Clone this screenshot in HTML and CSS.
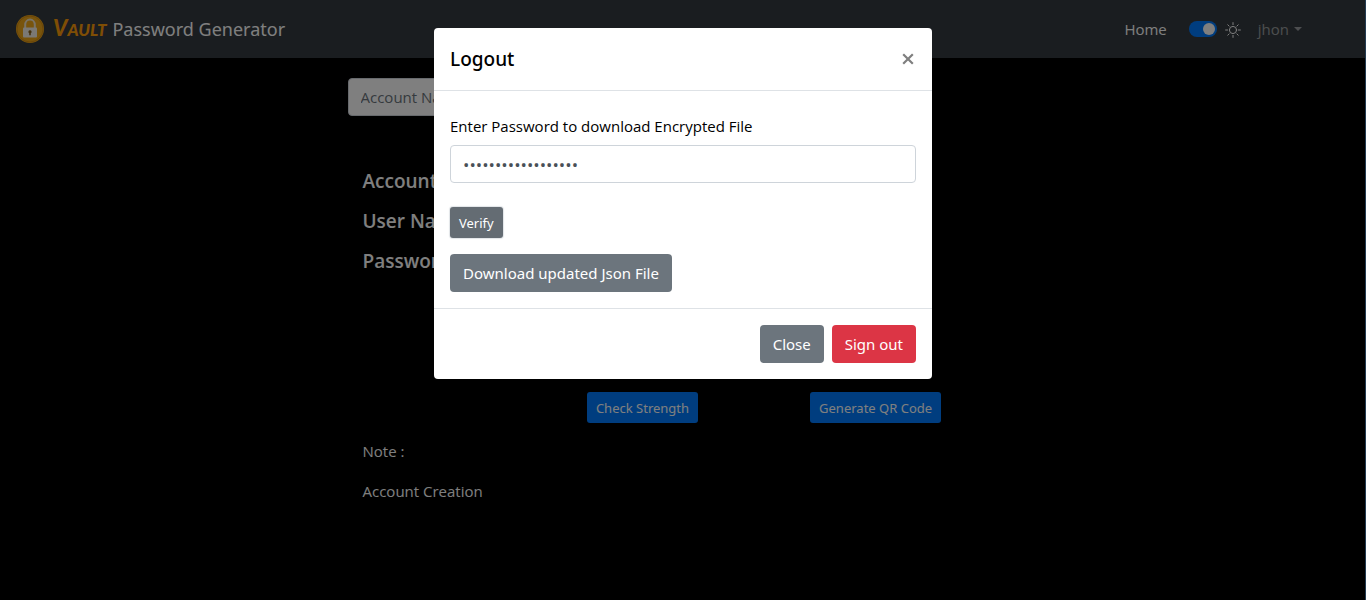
FILE: index.html
```
<!DOCTYPE html>
<html lang="en">
<head>
<meta charset="utf-8">
<meta name="viewport" content="width=device-width, initial-scale=1">
<title>Vault Password Generator</title>
<link rel="stylesheet" href="styles.css">
</head>
<body>
<header class="navbar">
  <a class="brand" href="#">
    <svg class="brand-icon" viewBox="0 0 28 28" aria-hidden="true">
      <circle cx="14" cy="14" r="14" fill="#f0a818"/>
      <circle cx="14" cy="14" r="13" fill="none" stroke="#d98d10" stroke-width="1"/>
      <path d="M9.2 13V9.8a4.8 5.3 0 0 1 9.6 0V13" fill="none" stroke="#f2e6cc" stroke-width="2"/>
      <rect x="7" y="12.5" width="14" height="10" rx="1" fill="#f7f2ea"/>
      <path d="M14 15.2a1.6 1.6 0 0 1 .8 3v2h-1.6v-2a1.6 1.6 0 0 1 .8-3z" fill="#8a6520"/>
    </svg>
    <span class="brand-mark">V<span class="brand-small">AULT</span></span>
    <span class="brand-name">Password Generator</span>
  </a>
  <nav class="nav">
    <a class="nav-link" href="#">Home</a>
    <div class="theme">
      <input class="switch" type="checkbox" id="theme" aria-label="Dark mode" checked>
      <label for="theme"><svg class="sun" viewBox="0 0 16 16" fill="none" stroke="#fff" stroke-width="1" stroke-linecap="round" aria-hidden="true">
        <circle cx="8" cy="8" r="3.6"/>
        <path d="M8 .6v2M8 13.4v2M.6 8h2M13.4 8h2M2.8 2.8l1.3 1.3M11.9 11.9l1.3 1.3M2.8 13.2l1.3-1.3M11.9 4.1l1.3-1.3"/>
      </svg></label>
    </div>
    <button class="user" type="button">jhon<span class="caret"></span></button>
  </nav>
</header>

<main class="page">
  <input class="control search" type="text" placeholder="Account Name" aria-label="Account Name">
  <section class="details">
    <h2 class="field">Account</h2>
    <h2 class="field">User Name</h2>
    <h2 class="field">Password</h2>
    <div class="actions">
      <button class="btn btn-sm btn-primary" type="button">Check Strength</button>
      <button class="btn btn-sm btn-primary" type="button">Generate QR Code</button>
    </div>
    <p class="line">Note :</p>
    <p class="line">Account Creation</p>
  </section>
</main>

<div class="backdrop">
  <div class="modal" role="dialog" aria-modal="true" aria-labelledby="modal-title">
    <div class="modal-header">
      <h1 class="modal-title" id="modal-title">Logout</h1>
      <button class="dismiss" type="button" aria-label="Dismiss">
        <svg class="cross" viewBox="0 0 12 12" aria-hidden="true"><path d="M1.2 1.2l9.6 9.6M10.8 1.2L1.2 10.8" stroke="#7f7f7f" stroke-width="2.2"/></svg>
      </button>
    </div>
    <div class="modal-body">
      <label class="label" for="password">Enter Password to download Encrypted File</label>
      <input class="control password" id="password" type="password" value="abcdefghijklmnopqr">
      <button class="btn btn-sm btn-secondary btn-pressed" type="button">Verify</button>
      <button class="btn btn-secondary" type="button">Download updated Json File</button>
    </div>
    <div class="modal-footer">
      <button class="btn btn-secondary" type="button">Close</button>
      <button class="btn btn-danger" type="button">Sign out</button>
    </div>
  </div>
</div>
</body>
</html>
```
FILE: styles.css
```
* { box-sizing: border-box; }

body {
  margin: 0;
  min-height: 100vh;
  border-right: 1px solid #4878a4;
  background: #000;
  color: #fff;
  font-family: "Open Sans", "Noto Sans", sans-serif;
  font-size: 15px;
  line-height: 24px;
}

button, input { font: inherit; margin: 0; }
a { color: inherit; text-decoration: none; }

.navbar {
  display: flex;
  align-items: center;
  justify-content: space-between;
  height: 58px;
  padding: 0 63px 0 16px;
  background: #343a40;
}

.brand { display: flex; align-items: center; }
.brand-icon { width: 28px; height: 28px; margin-right: 9px; }
.brand-mark {
  margin-right: 6px;
  color: #ff9d0a;
  font-family: "Lato", sans-serif;
  font-size: 22px;
  font-weight: 900;
  font-style: italic;
}
.brand-small { font-size: 17px; }
.brand-name { font-family: "Noto Sans", sans-serif; font-size: 18px; }

.nav { display: flex; align-items: center; }
.nav-link { margin-right: 22px; }
.theme { display: flex; align-items: center; gap: 8px; margin-right: 17px; }
.theme label { display: flex; padding-top: 2px; }

.switch {
  appearance: none;
  width: 28px;
  height: 16px;
  padding: 2px;
  border-radius: 8px;
  background: #007bff;
}
.switch::before {
  content: "";
  display: block;
  width: 12px;
  height: 12px;
  margin-left: auto;
  border-radius: 50%;
  background: #fff;
}
.sun { width: 16px; height: 16px; }

.user {
  display: flex;
  align-items: center;
  gap: 5px;
  padding: 0;
  border: 0;
  background: none;
  color: rgba(255, 255, 255, .5);
}
.caret {
  border-top: 4px solid;
  border-right: 4px solid transparent;
  border-left: 4px solid transparent;
}

.page {
  max-width: 670px;
  margin: 0 auto;
  padding-top: 20px;
}

.control {
  display: block;
  width: 100%;
  height: 38px;
  padding: 6px 12px;
  border: 1px solid #ced4da;
  border-radius: 4px;
  background: #fff;
  color: #495057;
}
.control::placeholder { color: #6c757d; opacity: 1; }
.search { width: 75%; }

.details { padding: 53px 15px 0; }
.field {
  margin: 0 0 16px;
  font-size: 19px;
  font-weight: 600;
  line-height: 24px;
}
.actions {
  display: flex;
  justify-content: center;
  gap: 112px;
  margin: 119px 0 16px;
  padding-left: 163px;
}
.line { margin: 0 0 16px; }

.btn {
  height: 38px;
  padding: 0 12px;
  border: 1px solid transparent;
  border-radius: 4px;
  color: #fff;
  font-family: "Noto Sans", sans-serif;
  white-space: nowrap;
}
.btn-sm { height: 31px; padding: 0 8px; border-radius: 3px; font-size: 13px; }
.btn-primary { background: #007bff; }
.btn-secondary { background: #6c757d; }
.btn-danger { background: #dc3545; }
.btn-pressed { background: #646c73; box-shadow: 0 0 1px 1px #e2e5e8; }

.backdrop {
  position: fixed;
  inset: 0;
  padding-top: 28px;
  background: rgba(0, 0, 0, .5);
}
.modal {
  max-width: 498px;
  margin: 0 auto;
  border-radius: 4px;
  background: #fff;
  color: #000;
}
.modal-header {
  display: flex;
  align-items: center;
  justify-content: space-between;
  padding: 16px;
  border-bottom: 1px solid #dee2e6;
}
.modal-title {
  margin: 0;
  font-family: "Noto Sans", sans-serif;
  font-size: 19px;
  font-weight: 500;
  line-height: 30px;
}
.dismiss { display: flex; padding: 2px; border: 0; background: none; }
.cross { width: 12px; height: 12px; }
.modal-body {
  display: flex;
  flex-direction: column;
  align-items: flex-start;
  gap: 16px;
  padding: 23px 16px 16px;
}
.label { margin-bottom: -9px; font-weight: 400; }
.password { margin-bottom: 8px; font-size: 17px; }
.modal-footer {
  display: flex;
  justify-content: flex-end;
  gap: 8px;
  padding: 16px;
  border-top: 1px solid #dee2e6;
}
```
